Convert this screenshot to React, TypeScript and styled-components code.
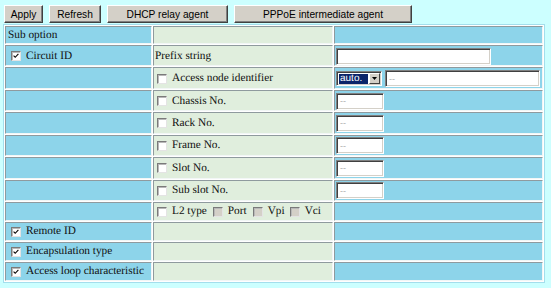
import React from 'react';
import styled, { createGlobalStyle } from 'styled-components';

const GlobalStyle = createGlobalStyle`
  html, body { margin: 0; padding: 0; background: #ccffff; }
  body {
    font-family: "Liberation Serif", "Times New Roman", serif;
    font-size: 11.3px;
    font-weight: 400;
    color: #000;
    text-rendering: geometricPrecision;
  }
  * { box-sizing: border-box; }
`;

const Page = styled.div`
  width: 551px;
  height: 288px;
  overflow: hidden;
`;

const Toolbar = styled.div`
  display: flex;
  gap: 6px;
  padding: 5px 0 0 4px;
  height: 23px;
`;

const Button = styled.button<{ $w: number }>`
  width: ${(p) => p.$w}px;
  height: 18px;
  margin: 0;
  padding: 0;
  font-family: "Liberation Sans", Arial, sans-serif;
  font-size: 10.2px;
  color: #000;
  background: #d4d0c8;
  border: 1px solid;
  border-color: #ffffff #404040 #404040 #ffffff;
  box-shadow: inset -1px -1px #808080;
  display: flex;
  align-items: center;
  justify-content: center;
`;

const Grid = styled.table`
  margin: 1px 0 0 3px;
  width: 542px;
  table-layout: fixed;
  border-collapse: separate;
  border-spacing: 1px;
  background: #ffffff;
  border: 1px solid #a3deec;
  font-size: 11.3px;
`;

const Row = styled.tr<{ $h: number }>`
  height: ${(p) => p.$h}px;
`;

const Cell = styled.td<{ $tone: 'blue' | 'green'; $w?: number; $pl?: number }>`
  ${(p) => (p.$w ? `width: ${p.$w}px;` : '')}
  background: ${(p) => (p.$tone === 'blue' ? '#8dd4ea' : '#e0eedd')};
  border: 1px solid;
  border-color: #8f9a9e #f2f6f6 #f2f6f6 #8f9a9e;
  padding: 1px 1px 0 ${(p) => p.$pl ?? 1}px;
  vertical-align: middle;
  white-space: nowrap;
  line-height: 13px;
  font-weight: 400;
  color: #101010;
`;

const Line = styled.div`
  display: flex;
  align-items: center;
`;

const Opt = styled.span<{ $gap?: number }>`
  display: inline-flex;
  align-items: center;
  margin-left: ${(p) => p.$gap ?? 0}px;
`;

const Box = styled.span<{ $disabled?: boolean; $ml?: number }>`
  width: 10px;
  height: 10px;
  flex: none;
  margin: 0 5px 0 ${(p) => p.$ml ?? 0}px;
  background: ${(p) => (p.$disabled ? '#d4d0c8' : '#ffffff')};
  border: 1px solid;
  border-color: #7a7a7a #e4e4e4 #e4e4e4 #7a7a7a;
  box-shadow: inset 1px 1px #b8b8b8;
  display: inline-flex;
  align-items: center;
  justify-content: center;
`;

const Field = styled.input<{ $w: number }>`
  appearance: none;
  width: ${(p) => p.$w}px;
  height: 17px;
  margin: 0;
  padding: 0 0 0 3px;
  background: #ffffff;
  border: 1px solid;
  border-color: #808080 #ffffff #ffffff #808080;
  box-shadow: inset 1px 1px #404040, inset -1px -1px #d4d0c8;
  font-family: "Liberation Sans", Arial, sans-serif;
  font-size: 9px;
  color: #b0b0b0;
  outline: none;
`;

const SelectBox = styled.div`
  width: 46px;
  height: 15px;
  display: flex;
  align-items: stretch;
  background: #ffffff;
  border: 1px solid;
  border-color: #808080 #ffffff #ffffff #808080;
  box-shadow: inset 1px 1px #404040, inset -1px -1px #d4d0c8;
  padding: 2px 1px 1px 2px;
  margin-right: 3px;
`;

const SelectValue = styled.span`
  flex: 1;
  display: flex;
  align-items: center;
  background: #0a246a;
  color: #ffffff;
  font-family: "Liberation Sans", Arial, sans-serif;
  font-size: 10px;
  line-height: 1;
  padding-left: 1px;
  overflow: hidden;
`;

const SelectArrow = styled.span`
  width: 11px;
  margin: -1px 0 0 1px;
  background: #d4d0c8;
  border: 1px solid;
  border-color: #ffffff #404040 #404040 #ffffff;
  display: flex;
  align-items: center;
  justify-content: center;
`;

const Check = () => (
  <svg width="6" height="6" viewBox="0 0 6 6">
    <path d="M0.6 2.6 L2.2 4.3 L5.4 0.9" fill="none" stroke="#000" strokeWidth="1.1" />
  </svg>
);

const Arrow = () => (
  <svg width="5" height="3" viewBox="0 0 5 3">
    <path d="M0 0 H5 L2.5 3 Z" fill="#000" />
  </svg>
);

const CheckItem = ({
  label,
  checked,
  disabled,
  ml,
  gap,
}: {
  label: string;
  checked?: boolean;
  disabled?: boolean;
  ml?: number;
  gap?: number;
}) => (
  <Opt $gap={gap}>
    <Box $disabled={disabled} $ml={ml}>
      {checked ? <Check /> : null}
    </Box>
    {label}
  </Opt>
);

const INPUT_H = 21.43;
const CHECK_H = 19;

const subRows = ['Chassis No.', 'Rack No.', 'Frame No.', 'Slot No.', 'Sub slot No.'];
const tailRows = ['Remote ID', 'Encapsulation type', 'Access loop characteristic'];

export default function App() {
  return (
    <Page>
      <GlobalStyle />
      <Toolbar>
        <Button $w={39}>Apply</Button>
        <Button $w={52}>Refresh</Button>
        <Button $w={121}>DHCP relay agent</Button>
        <Button $w={178}>PPPoE intermediate agent</Button>
      </Toolbar>
      <Grid>
        <tbody>
          <Row $h={18}>
            <Cell $tone="blue" $w={147} $pl={2}>Sub option</Cell>
            <Cell $tone="green" $w={180} />
            <Cell $tone="blue" $w={209} />
          </Row>
          <Row $h={INPUT_H}>
            <Cell $tone="blue" $pl={2}>
              <Line><CheckItem label="Circuit ID" checked ml={3} /></Line>
            </Cell>
            <Cell $tone="green">Prefix string</Cell>
            <Cell $tone="blue">
              <Line><Field $w={155} readOnly defaultValue="" /></Line>
            </Cell>
          </Row>
          <Row $h={INPUT_H}>
            <Cell $tone="blue" />
            <Cell $tone="green">
              <Line><CheckItem label="Access node identifier" ml={2} /></Line>
            </Cell>
            <Cell $tone="blue">
              <Line>
                <SelectBox>
                  <SelectValue>auto.</SelectValue>
                  <SelectArrow><Arrow /></SelectArrow>
                </SelectBox>
                <Field $w={155} readOnly defaultValue="--" />
              </Line>
            </Cell>
          </Row>
          {subRows.map((label) => (
            <Row $h={INPUT_H} key={label}>
              <Cell $tone="blue" />
              <Cell $tone="green">
                <Line><CheckItem label={label} ml={2} /></Line>
              </Cell>
              <Cell $tone="blue">
                <Line><Field $w={48} readOnly defaultValue="--" /></Line>
              </Cell>
            </Row>
          ))}
          <Row $h={CHECK_H}>
            <Cell $tone="blue" />
            <Cell $tone="green">
              <Line>
                <CheckItem label="L2 type" ml={2} />
                <CheckItem label="Port" disabled gap={6} />
                <CheckItem label="Vpi" disabled gap={6} />
                <CheckItem label="Vci" disabled gap={5} />
              </Line>
            </Cell>
            <Cell $tone="blue" />
          </Row>
          {tailRows.map((label) => (
            <Row $h={CHECK_H} key={label}>
              <Cell $tone="blue" $pl={2}>
                <Line><CheckItem label={label} checked ml={3} /></Line>
              </Cell>
              <Cell $tone="green" />
              <Cell $tone="blue" />
            </Row>
          ))}
        </tbody>
      </Grid>
    </Page>
  );
}
